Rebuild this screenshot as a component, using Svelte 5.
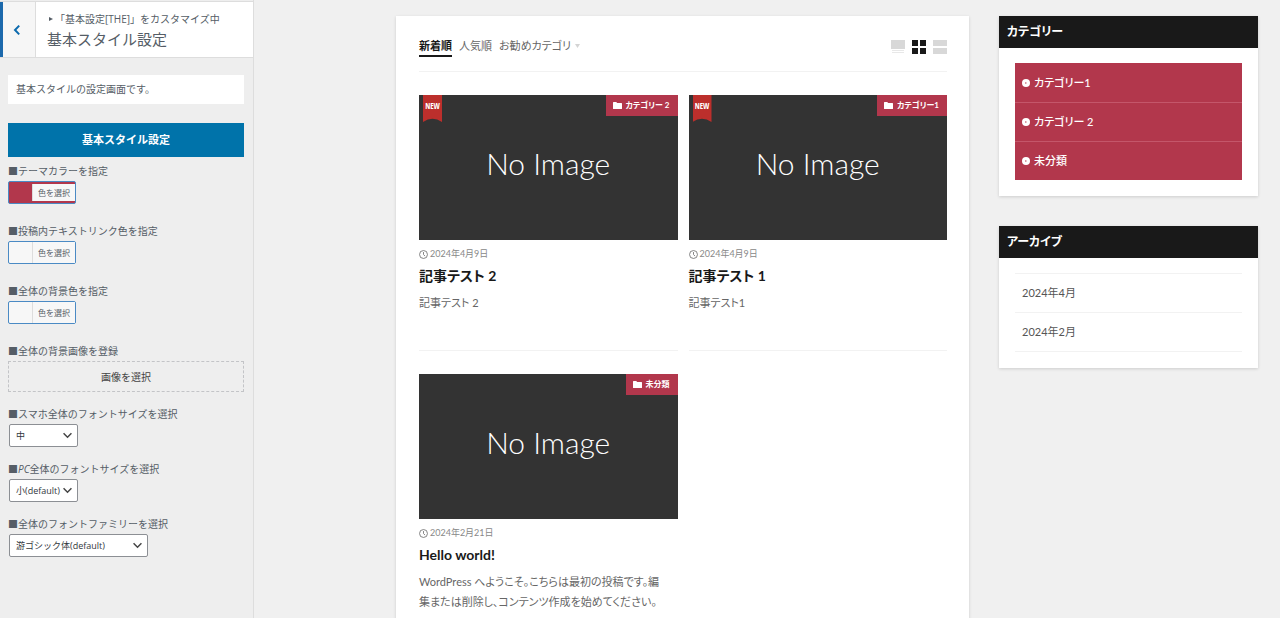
<script lang="ts">
    let activeTab = $state("新着順");
    let activeLayout = $state("grid");
    let mobileSize = $state("中");
    let pcSize = $state("小(default)");
    let fontFamily = $state("游ゴシック体(default)");

    const tabs = ["新着順", "人気順"];

    const colorSettings = [
        { id: "theme", label: "■テーマカラーを指定", color: "#b2374c" },
        { id: "link", label: "■投稿内テキストリンク色を指定", color: "" },
        { id: "background", label: "■全体の背景色を指定", color: "" },
    ];

    const posts = [
        {
            title: "記事テスト 2",
            date: "2024年4月9日",
            category: "カテゴリー 2",
            excerpt: "記事テスト 2",
            isNew: true,
        },
        {
            title: "記事テスト 1",
            date: "2024年4月9日",
            category: "カテゴリー1",
            excerpt: "記事テスト1",
            isNew: true,
        },
        {
            title: "Hello world!",
            date: "2024年2月21日",
            category: "未分類",
            excerpt:
                "WordPress へようこそ。こちらは最初の投稿です。編集または削除し、コンテンツ作成を始めてください。",
            isNew: false,
        },
    ];

    const categories = ["カテゴリー1", "カテゴリー 2", "未分類"];
    const archives = ["2024年4月", "2024年2月"];
</script>

<div class="customizer">
    <section class="controls">
        <header class="panel-header">
            <button class="back" aria-label="戻る">
                <svg viewBox="0 0 8 12" width="8" height="12">
                    <path d="M6.2 1.6 2 6l4.2 4.4" fill="none" stroke="#0b6aae" stroke-width="2" />
                </svg>
            </button>
            <div class="panel-title">
                <p>
                    <svg viewBox="0 0 4 6" width="4" height="6"><path d="M0 1v4l4-2z" fill="#555d66" /></svg>
                    <span>「基本設定[THE]」をカスタマイズ中</span>
                </p>
                <h1>基本スタイル設定</h1>
            </div>
        </header>

        <div class="panel-body">
            <p class="description">基本スタイルの設定画面です。</p>
            <h2 class="section-title">基本スタイル設定</h2>

            {#each colorSettings as setting (setting.id)}
                <div class="control color">
                    <span class="label" id={`label-${setting.id}`}>{setting.label}</span>
                    <button
                        class="color-button"
                        class:filled={setting.color !== ""}
                        style:background-color={setting.color || null}
                        aria-describedby={`label-${setting.id}`}
                    >
                        <span>色を選択</span>
                    </button>
                </div>
            {/each}

            <div class="control">
                <span class="label" id="label-image">■全体の背景画像を登録</span>
                <button class="image-button" aria-describedby="label-image">画像を選択</button>
            </div>

            <div class="control">
                <label class="label" for="mobile-size">■スマホ全体のフォントサイズを選択</label>
                <select id="mobile-size" bind:value={mobileSize}>
                    <option>小</option>
                    <option>中</option>
                    <option>大</option>
                </select>
            </div>
            <div class="control">
                <label class="label" for="pc-size">■<em>PC</em>全体のフォントサイズを選択</label>
                <select id="pc-size" bind:value={pcSize}>
                    <option>小(default)</option>
                    <option>中</option>
                    <option>大</option>
                </select>
            </div>
            <div class="control">
                <label class="label" for="font-family">■全体のフォントファミリーを選択</label>
                <select id="font-family" class="wide" bind:value={fontFamily}>
                    <option>游ゴシック体(default)</option>
                    <option>メイリオ</option>
                </select>
            </div>
        </div>
    </section>

    <div class="preview">
        <main>
            <div class="toolbar">
                <nav class="tabs">
                    {#each tabs as tab}
                        <button class:active={activeTab === tab} onclick={() => (activeTab = tab)}>{tab}</button>
                    {/each}
                    <button class="more">
                        お勧めカテゴリ
                        <svg viewBox="0 0 5 4" width="5" height="4"><path d="M0 0h5L2.5 4z" fill="#d4d4d4" /></svg>
                    </button>
                </nav>
                <div class="layouts">
                    <button
                        class:active={activeLayout === "wide"}
                        onclick={() => (activeLayout = "wide")}
                        aria-label="ワイド表示"
                    >
                        <svg viewBox="0 0 14 14" width="14" height="14">
                            <path d="M0 0h14v9H0z" fill="currentColor" />
                            <path d="M1 10h12v1H1zM1 12h12v1H1z" fill="currentColor" opacity="0.6" />
                        </svg>
                    </button>
                    <button
                        class:active={activeLayout === "grid"}
                        onclick={() => (activeLayout = "grid")}
                        aria-label="グリッド表示"
                    >
                        <svg viewBox="0 0 14 14" width="14" height="14">
                            <path d="M0 0h6v6H0zM8 0h6v6H8zM0 8h6v6H0zM8 8h6v6H8z" fill="currentColor" />
                        </svg>
                    </button>
                    <button
                        class:active={activeLayout === "list"}
                        onclick={() => (activeLayout = "list")}
                        aria-label="リスト表示"
                    >
                        <svg viewBox="0 0 14 14" width="14" height="14">
                            <path d="M0 0h14v6H0zM0 8h14v6H0z" fill="currentColor" />
                        </svg>
                    </button>
                </div>
            </div>

            <div class="posts">
                {#each posts as post}
                    <article>
                        <div class="thumb">
                            <span class="no-image">No Image</span>
                            {#if post.isNew}
                                <span class="ribbon">NEW</span>
                            {/if}
                            <a class="badge" href="#category">
                                <svg viewBox="0 0 9 7" width="9" height="7">
                                    <path d="M0 .6Q0 0 .6 0h2.6l1 1h4.2q.6 0 .6.6v4.8q0 .6-.6.6H.6Q0 7 0 6.400z" fill="#fff" />
                                </svg>
                                {post.category}
                            </a>
                        </div>
                        <p class="date">
                            <svg viewBox="0 0 10 10" width="9" height="9" fill="none" stroke="#777">
                                <circle cx="5" cy="5" r="4.400" />
                                <path d="M5 2.300V5l1.700 1.800" />
                            </svg>
                            {post.date}
                        </p>
                        <h2><a href="#post">{post.title}</a></h2>
                        <p class="excerpt">{post.excerpt}</p>
                    </article>
                {/each}
            </div>
        </main>

        <aside>
            <section class="widget">
                <h3>カテゴリー</h3>
                <ul class="categories">
                    {#each categories as category}
                        <li>
                            <a href="#category">
                                <svg viewBox="0 0 8 8" width="8" height="8">
                                    <circle cx="4" cy="4" r="4" fill="#fff" />
                                    <path d="m3.400 3 1.500 1-1.500 1z" fill="#b2374c" />
                                </svg>
                                {category}
                            </a>
                        </li>
                    {/each}
                </ul>
            </section>
            <section class="widget">
                <h3>アーカイブ</h3>
                <ul class="archives">
                    {#each archives as archive}
                        <li><a href="#archive">{archive}</a></li>
                    {/each}
                </ul>
            </section>
        </aside>
    </div>
</div>

<style>
    :global(body) {
        margin: 0;
        background: #f0f0f0;
    }

    h1,
    h2,
    h3,
    p,
    ul {
        margin: 0;
        padding: 0;
        list-style: none;
    }

    button,
    select {
        font-family: inherit;
        color: inherit;
        cursor: pointer;
    }

    a {
        color: inherit;
        text-decoration: none;
    }

    svg {
        flex: none;
    }

    .customizer {
        display: flex;
        height: 100vh;
        overflow: hidden;
        font-family: "Open Sans", "Noto Sans CJK JP", sans-serif;
        color: #555d66;
    }

    /* Left panel */
    .controls {
        flex: none;
        width: 253px;
        padding-top: 1px;
        background: #eee;
        border-right: 1px solid #ddd;
    }

    .panel-header {
        display: flex;
        height: 55px;
        background: #fff;
        border-top: 1px solid #ddd;
        border-bottom: 1px solid #ddd;
    }

    .back {
        display: flex;
        align-items: center;
        justify-content: center;
        width: 36px;
        padding: 0 4px 0 0;
        background: #f6f6f6;
        border: none;
        border-left: 3px solid #1c69ac;
        border-right: 1px solid #ddd;
    }

    .panel-title {
        padding: 8px 0 0 11px;
    }

    .panel-title p {
        display: flex;
        align-items: center;
        gap: 2px;
        padding-left: 2px;
        font-size: 10px;
        line-height: 18px;
    }

    .panel-title h1 {
        font-size: 15px;
        font-weight: 400;
        line-height: 22px;
    }

    .panel-body {
        padding: 17px 9px 0 8px;
    }

    .description {
        padding: 0 8px;
        font-size: 10px;
        line-height: 29px;
        background: #fff;
    }

    .section-title {
        margin: 19px 0 4px;
        font-size: 11px;
        font-weight: 700;
        line-height: 34px;
        text-align: center;
        color: #fff;
        background: #0073aa;
    }

    .control {
        display: flex;
        flex-direction: column;
        align-items: flex-start;
        margin-bottom: 12px;
    }

    .control.color {
        margin-bottom: 17px;
    }

    .label {
        font-size: 10px;
        line-height: 20px;
    }

    .color-button {
        display: flex;
        justify-content: flex-end;
        width: 68px;
        height: 23px;
        padding: 0;
        background: #f7f7f7;
        border: 1px solid #4a8ac4;
        border-radius: 2px;
    }

    .color-button.filled {
        padding: 2px 0;
    }

    .color-button span {
        padding: 0 5px;
        font-size: 8px;
        line-height: 21px;
        background: #f7f7f7;
        border-left: 1px solid #ddd;
    }

    .color-button.filled span {
        line-height: 17px;
    }

    .image-button {
        width: 100%;
        height: 31px;
        padding: 0;
        font-size: 10px;
        color: #444;
        background: transparent;
        border: 1px dashed #c3c4c7;
    }

    select {
        width: 69px;
        height: 23px;
        margin-left: 1px;
        padding: 0 16px 0 6px;
        font-size: 9px;
        color: #32373c;
        appearance: none;
        background: #fff
            url("data:image/svg+xml,%3Csvg xmlns='http://www.w3.org/2000/svg' viewBox='0 0 8 6'%3E%3Cpath d='m.5 1 3.500 3.500L7.500 1' fill='none' stroke='%23444' stroke-width='1.300'/%3E%3C/svg%3E")
            no-repeat right 5px center / 9px 7px;
        border: 1px solid #8c8f94;
        border-radius: 2px;
    }

    select.wide {
        width: 139px;
    }

    /* Blog preview */
    .preview {
        display: flex;
        align-items: flex-start;
        gap: 30px;
        flex: 1;
        padding: 16px 22px 0 142px;
        overflow: hidden;
        font-family: Lato, "Noto Sans CJK JP", sans-serif;
        font-feature-settings: "palt";
        color: #666;
        background: #f0f0f0;
    }

    main {
        flex: 1;
        min-width: 0;
        padding: 0 22px 24px 23px;
        background: #fff;
        box-shadow: 0 1px 3px rgba(0, 0, 0, 0.15);
    }

    .toolbar {
        display: flex;
        align-items: center;
        justify-content: space-between;
        height: 56px;
        padding-top: 6px;
        box-sizing: border-box;
        border-bottom: 1px solid #f2f2f2;
    }

    .tabs,
    .layouts {
        display: flex;
        gap: 7px;
    }

    .tabs button {
        padding: 0;
        font-size: 11px;
        line-height: 18px;
        font-feature-settings: inherit;
        background: none;
        border: none;
        border-bottom: 2px solid transparent;
    }

    .tabs button.active {
        font-weight: 700;
        color: #191919;
        border-bottom-color: #191919;
    }

    .tabs .more {
        display: flex;
        align-items: center;
        gap: 4px;
    }

    .layouts button {
        display: flex;
        align-items: center;
        padding: 0;
        color: #d8d8d8;
        background: none;
        border: none;
    }

    .layouts button.active {
        color: #191919;
    }

    .posts {
        display: grid;
        grid-template-columns: 1fr 1fr;
        gap: 23px 11px;
        padding-top: 23px;
    }

    article {
        min-height: 255px;
        border-bottom: 1px solid #f2f2f2;
    }

    .thumb {
        position: relative;
        display: flex;
        align-items: center;
        justify-content: center;
        height: 145px;
        background: #333;
    }

    .no-image {
        padding-bottom: 10px;
        font-size: 30px;
        font-weight: 300;
        line-height: 40px;
        color: #fff;
    }

    .ribbon {
        position: absolute;
        top: 0;
        left: 4px;
        width: 19px;
        height: 27px;
        font-family: "Liberation Sans Narrow", "Open Sans Condensed", "DejaVu Sans Condensed", sans-serif;
        font-size: 8px;
        font-weight: 700;
        line-height: 22px;
        text-align: center;
        color: #fff;
        background: #bc2f2c;
        clip-path: polygon(0 0, 100% 0, 100% 100%, 75% 91%, 50% 88%, 25% 91%, 0 100%);
    }

    .badge {
        position: absolute;
        top: 0;
        right: 0;
        display: flex;
        align-items: center;
        gap: 4px;
        padding: 0 8px 0 7px;
        font-size: 8px;
        font-weight: 700;
        line-height: 21px;
        color: #fff;
        background: #b2374c;
    }

    .date {
        display: flex;
        align-items: center;
        gap: 2px;
        padding: 5px 0 2px;
        font-size: 9px;
        line-height: 18px;
        color: #888;
    }

    article h2 {
        font-size: 14px;
        font-weight: 700;
        line-height: 22px;
        color: #191919;
    }

    .excerpt {
        padding: 6px 16px 0 0;
        font-size: 11px;
        line-height: 20px;
    }

    /* Widgets */
    aside {
        display: flex;
        flex-direction: column;
        flex: none;
        gap: 30px;
        width: 259px;
    }

    .widget {
        background: #fff;
        box-shadow: 0 1px 3px rgba(0, 0, 0, 0.15);
    }

    .widget h3 {
        padding-left: 8px;
        font-size: 12px;
        font-weight: 700;
        line-height: 32px;
        color: #fff;
        background: #191919;
    }

    .widget ul {
        padding: 15px 16px 16px;
    }

    .widget li a {
        display: flex;
        align-items: center;
        gap: 4px;
        padding: 0 7px;
        font-size: 11px;
        line-height: 39px;
    }

    .categories li {
        font-weight: 500;
        color: #fff;
        background: #b2374c;
    }

    .categories li + li {
        box-shadow: inset 0 1px #c4566a;
    }

    .archives li {
        color: #555;
        border-bottom: 1px solid #f2f2f2;
    }

    .widget .archives a {
        line-height: 38px;
    }

    .archives li:first-child {
        border-top: 1px solid #f2f2f2;
    }
</style>
